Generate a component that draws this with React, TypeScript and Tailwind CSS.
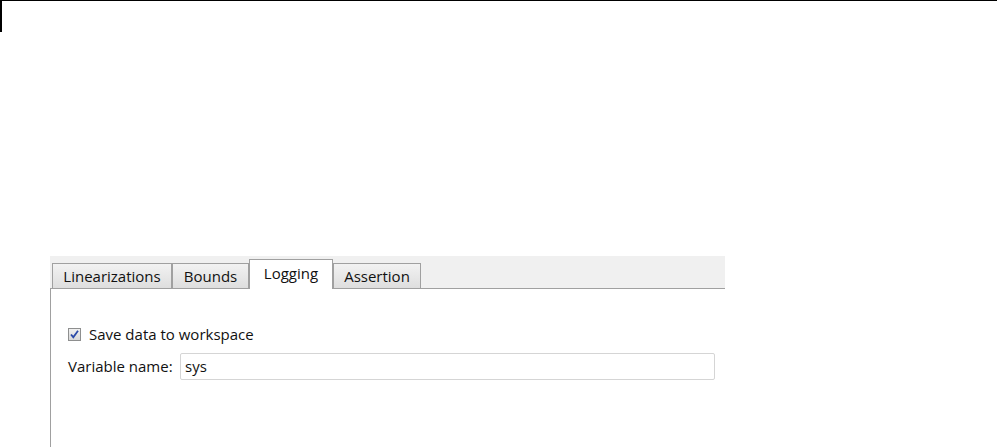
import React from "react";

const font = { fontFamily: '"Open Sans", "Liberation Sans", sans-serif' };

function Tab({ label, width, selected }: { label: string; width: string; selected?: boolean }) {
  if (selected) {
    return (
      <div
        className={`${width} h-[30px] -mb-px relative z-10 bg-white border-t border-x border-[#a0a0a0] flex items-center justify-center text-[15px] text-[#111] pb-[3px]`}
      >
        {label}
      </div>
    );
  }
  return (
    <div
      className={`${width} h-[25px] border-t border-x border-[#a0a0a0] bg-gradient-to-b from-[#f2f2f2] to-[#dedede] flex items-center justify-center text-[15px] text-[#111]`}
    >
      {label}
    </div>
  );
}

export default function App() {
  return (
    <div className="w-[997px] h-[447px] bg-white overflow-hidden" style={font}>
      <div className="h-px bg-black" />
      <div className="w-[2px] h-[31px] bg-black" />
      <div className="ml-[50px] mt-[224px] w-[675px]">
        <div className="h-[33px] bg-[#f0f0f0] border-b border-[#a0a0a0] flex items-end pl-[2px]">
          <Tab label="Linearizations" width="w-[120px]" />
          <Tab label="Bounds" width="w-[77px]" />
          <Tab label="Logging" width="w-[84px]" selected />
          <Tab label="Assertion" width="w-[88px]" />
        </div>
        <div className="h-[200px] border-l border-[#a0a0a0] pl-[17px] pt-[35px]">
          <div className="h-[20px] flex items-center">
            <div className="w-[13px] h-[13px] border border-[#8e8f8f] bg-gradient-to-b from-[#f0f0f0] to-[#d8d8d8] flex items-center justify-center">
              <svg width="11" height="11" viewBox="0 0 11 11">
                <path d="M2 5.5 L4.3 8.2 L9 1.8" fill="none" stroke="#2b4aa8" strokeWidth="1.8" />
              </svg>
            </div>
            <span className="ml-[8px] text-[15px] text-[#111]">Save data to workspace</span>
          </div>
          <div className="mt-[9px] h-[27px] flex items-center">
            <span className="w-[112px] text-[15px] text-[#111]">Variable name:</span>
            <div className="w-[535px] h-[27px] border border-[#d5d5d5] rounded-[2px] flex items-center pl-[4px] text-[15px] text-[#111]">
              sys
            </div>
          </div>
        </div>
      </div>
    </div>
  );
}
